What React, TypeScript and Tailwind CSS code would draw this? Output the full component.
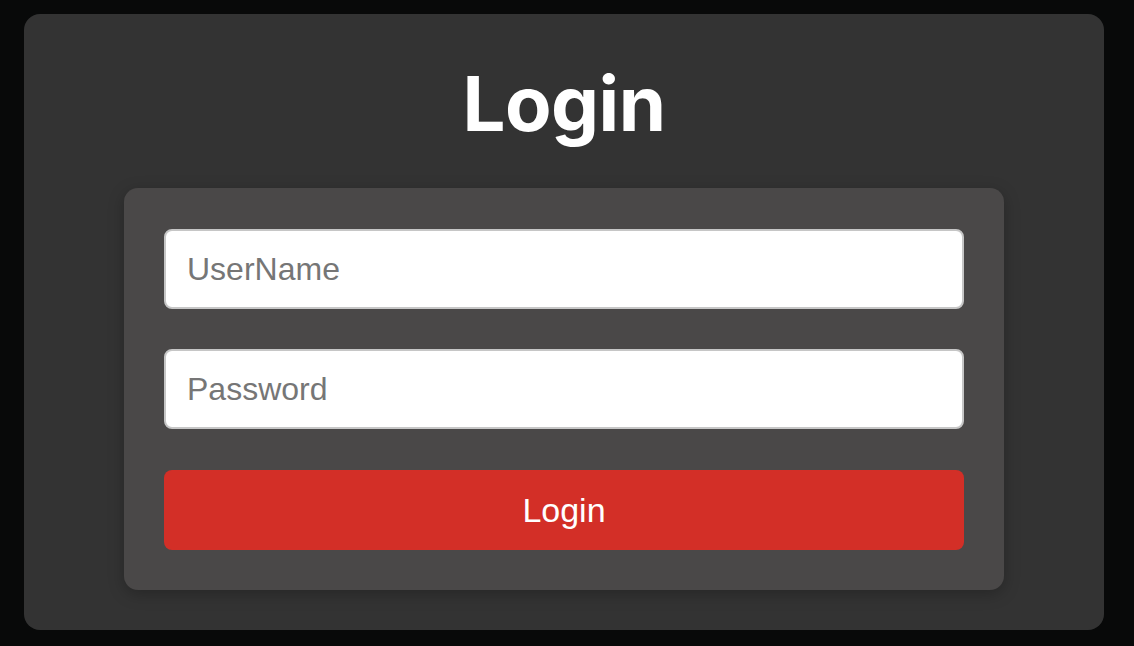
export default function App() {
  return (
    <div className="min-h-[646px] w-full bg-[#080909] pt-[14px] pl-[24px] pr-[30px]" style={{ fontFamily: '"Liberation Sans", Arial, sans-serif' }}>
      <div className="w-[1080px] h-[616px] bg-[#333333] rounded-[16px] flex flex-col items-center">
        <h1 className="mt-[43px] text-[76px] leading-[92px] font-bold text-white tracking-[-0.5px]" style={{ fontFamily: 'Inter, "Liberation Sans", sans-serif' }}>
          Login
        </h1>
        <div className="mt-[39px] w-[880px] bg-[#4a4848] rounded-[14px] pt-[41px] px-[40px] pb-[40px] flex flex-col shadow-[0_4px_16px_rgba(0,0,0,0.25)]">
          <input
            type="text"
            placeholder="UserName"
            className="h-[80px] w-full bg-white rounded-[8px] border-2 border-[#c6c6c6] px-[21px] text-[32px] text-black placeholder:text-[#767676] outline-none"
          />
          <input
            type="password"
            placeholder="Password"
            className="mt-[40px] h-[80px] w-full bg-white rounded-[8px] border-2 border-[#c6c6c6] px-[21px] text-[32px] text-black placeholder:text-[#767676] outline-none"
          />
          <button className="mt-[41px] h-[80px] w-full bg-[#d32f27] rounded-[8px] text-white text-[34px]">
            Login
          </button>
        </div>
      </div>
    </div>
  );
}
